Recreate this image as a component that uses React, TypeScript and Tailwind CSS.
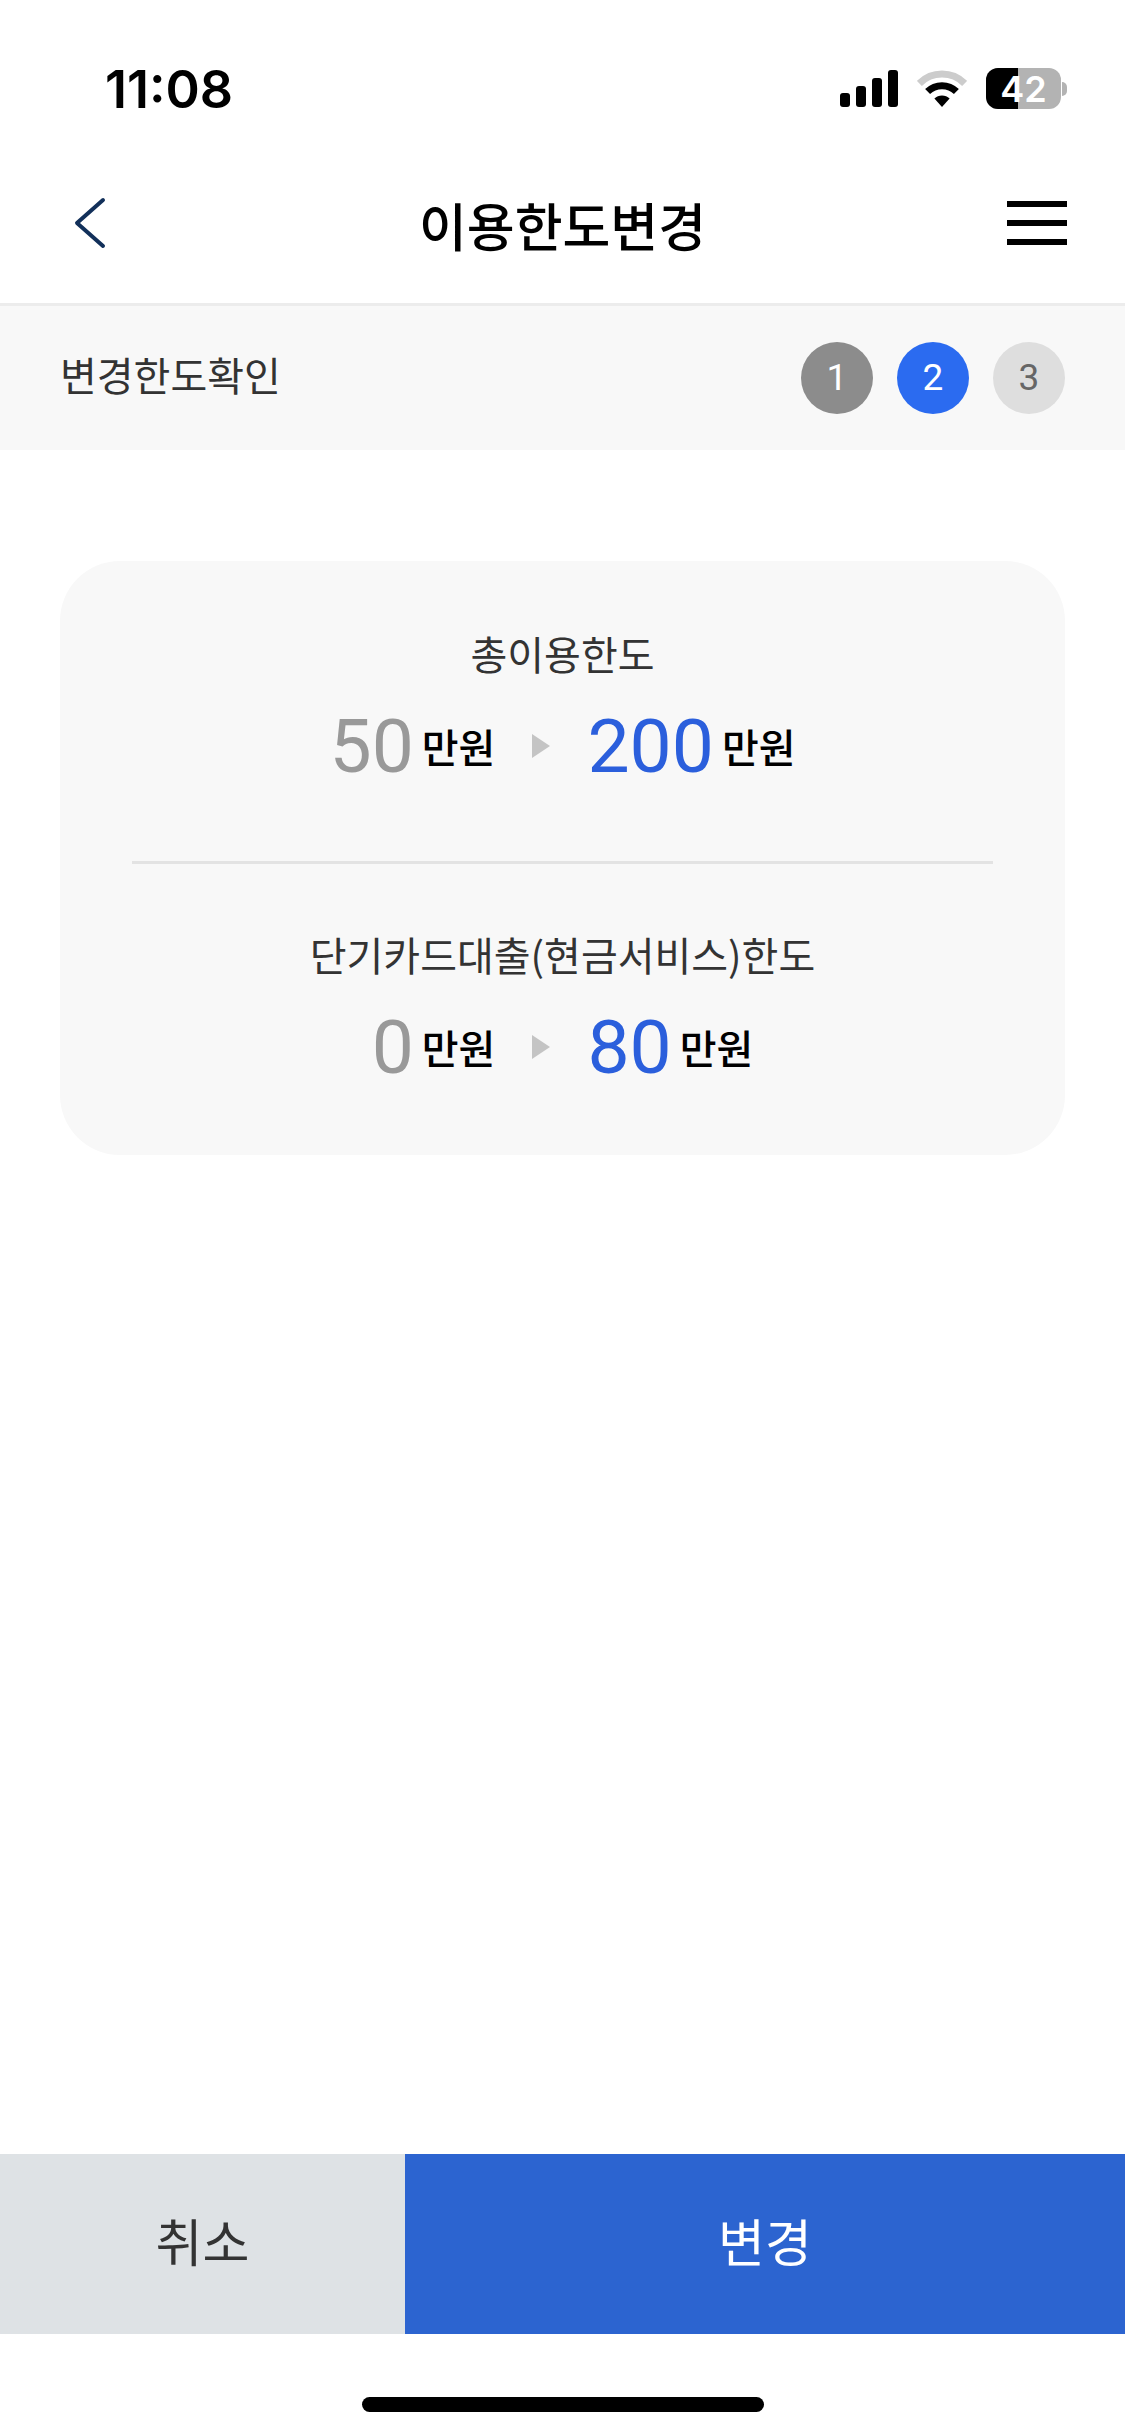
import React from "react";

const KR = "font-['Noto_Sans_CJK_KR','Noto_Sans',sans-serif]";

const WifiIcon = () => (
  <svg width="50" height="37" viewBox="0 0 50 37" fill="none">
    <path d="M2.4 13.4A32 32 0 0 1 47.6 13.4" stroke="#cccccc" strokeWidth="7" />
    <path d="M10.6 21.6A20.4 20.4 0 0 1 39.4 21.6" stroke="#000000" strokeWidth="7" />
    <path d="M17.4 28.6A10.8 10.8 0 0 1 32.6 28.6L25 37Z" fill="#000000" />
  </svg>
);

const SignalIcon = () => (
  <div className="flex items-end gap-[6px] h-[37px]">
    <div className="w-[10px] h-[14px] rounded-[3px] bg-black" />
    <div className="w-[10px] h-[21px] rounded-[3px] bg-black" />
    <div className="w-[10px] h-[29px] rounded-[3px] bg-black" />
    <div className="w-[10px] h-[37px] rounded-[3px] bg-black" />
  </div>
);

const BatteryIcon = () => (
  <div className="flex items-center">
    <div className="relative w-[75px] h-[41px] rounded-[12px] overflow-hidden bg-[#b3b3b3] flex items-center justify-center">
      <div className="absolute left-0 top-0 bottom-0 w-[32px] bg-black" />
      <span className="relative text-white font-['Inter',sans-serif] font-semibold text-[36px] leading-none">42</span>
    </div>
    <div className="w-[5px] h-[14px] ml-[1px] rounded-r-full bg-[#b3b3b3]" />
  </div>
);

const StatusBar = () => (
  <div className="h-[123px] pt-[65px] pl-[105px] pr-[58px] flex items-start justify-between">
    <span className="font-['Inter',sans-serif] font-semibold text-[52px] leading-[50px] text-black">11:08</span>
    <div className="flex items-center gap-[19px] mt-[3px]">
      <SignalIcon />
      <WifiIcon />
      <BatteryIcon />
    </div>
  </div>
);

const Header = () => (
  <div className="h-[183px] pt-[20px] border-b-[3px] border-[#ececec] pl-[74px] pr-[58px] flex items-center justify-between relative">
    <svg width="32" height="52" viewBox="0 0 32 52" fill="none">
      <path d="M29 3L3 26L29 49" stroke="#12305a" strokeWidth="4" strokeLinecap="round" strokeLinejoin="round" />
    </svg>
    <h1 className={`absolute left-0 right-0 text-center pt-[4px] text-[52px] leading-[60px] font-medium text-black ${KR}`}>이용한도변경</h1>
    <div className="flex flex-col gap-[13px] w-[60px]">
      <div className="h-[6px] bg-black" />
      <div className="h-[6px] bg-black" />
      <div className="h-[6px] bg-black" />
    </div>
  </div>
);

const StepBar = () => (
  <div className="h-[144px] bg-[#f8f8f8] px-[60px] flex items-center justify-between">
    <span className={`text-[40px] leading-[48px] mb-[8px] text-[#333333] ${KR}`}>변경한도확인</span>
    <div className="flex gap-[24px] font-['Roboto',sans-serif] text-[37px]">
      <div className="w-[72px] h-[72px] rounded-full bg-[#8c8c8c] text-white flex items-center justify-center">1</div>
      <div className="w-[72px] h-[72px] rounded-full bg-[#2b6bf0] text-white flex items-center justify-center">2</div>
      <div className="w-[72px] h-[72px] rounded-full bg-[#dedede] text-[#666666] flex items-center justify-center">3</div>
    </div>
  </div>
);

const Unit = () => (
  <span className={`text-[40px] leading-[48px] font-medium text-black ml-[8px] ${KR}`}>만원</span>
);

const LimitRow = ({ label, from, to }: { label: string; from: string; to: string }) => (
  <div className="flex flex-col items-center">
    <div className={`text-[40px] leading-[50px] text-[#333333] ${KR}`}>{label}</div>
    <div className="flex items-center mt-[33px] h-[70px]">
      <span className="font-['Roboto',sans-serif] text-[75px] leading-[70px] text-[#999999]">{from}</span>
      <Unit />
      <div className="w-0 h-0 mx-[37px] border-y-[12px] border-y-transparent border-l-[18px] border-l-[#c4c4c4]" />
      <span className="font-['Roboto',sans-serif] text-[75px] leading-[70px] text-[#2b5fdc]">{to}</span>
      <Unit />
    </div>
  </div>
);

const LimitCard = () => (
  <div className="mx-[60px] mt-[111px] h-[594px] rounded-[60px] bg-[#f8f8f8] pt-[67px] px-[72px]">
    <LimitRow label="총이용한도" from="50" to="200" />
    <div className="h-[3px] bg-[#e3e3e3] mt-[80px] mb-[65px]" />
    <LimitRow label="단기카드대출(현금서비스)한도" from="0" to="80" />
  </div>
);

const BottomButtons = () => (
  <div className={`flex h-[180px] text-[51px] ${KR}`}>
    <button className="w-[405px] pb-[8px] bg-[#dee2e5] text-[#333333]">취소</button>
    <button className="flex-1 pb-[8px] bg-[#2c64d0] text-white">변경</button>
  </div>
);

const App = () => {
  return (
    <div className="w-[1125px] h-[2436px] bg-white flex flex-col overflow-hidden">
      <StatusBar />
      <Header />
      <StepBar />
      <LimitCard />
      <div className="flex-1" />
      <BottomButtons />
      <div className="h-[102px] pt-[63px] flex justify-center">
        <div className="w-[402px] h-[15px] rounded-full bg-black" />
      </div>
    </div>
  );
};

export default App;
